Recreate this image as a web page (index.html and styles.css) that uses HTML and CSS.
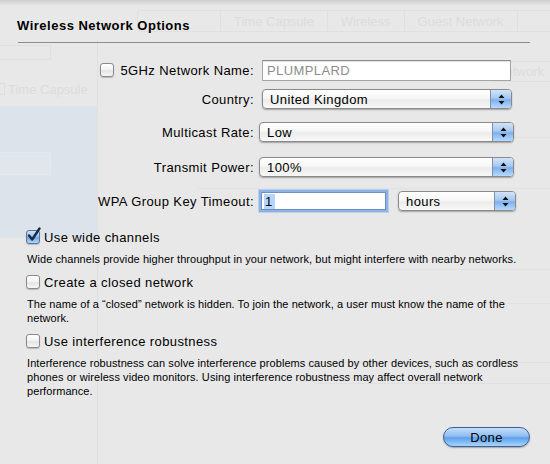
FILE: index.html
```html
<!DOCTYPE html>
<html>
<head>
<meta charset="utf-8">
<link rel="stylesheet" href="styles.css">
</head>
<body>
<div class="window">
  <div class="toolbar">
    <div class="seg">
      <span class="seg-item s1"></span>
      <span class="seg-item">Time Capsule</span>
      <span class="seg-item">Wireless</span>
      <span class="seg-item">Guest Network</span>
      <span class="seg-item s5"></span>
    </div>
  </div>
  <div class="main">
    <aside class="side">
      <div class="g-popup"></div>
      <div class="g-item"><span class="g-icon"></span><span>Time Capsule</span></div>
      <div class="g-sel">
        <div class="g-box"></div>
      </div>
    </aside>
    <div class="pane">
      <div class="g-netbtn">Network</div>
      <div class="g-line l1"></div>
      <div class="g-line l2"></div>
      <div class="g-line l3"></div>
      <div class="g-line l4"></div>
      <div class="g-pill"></div>
    </div>
  </div>
</div>

<div class="sheet">
  <h1 class="title">Wireless Network Options</h1>

  <div class="form">
    <div class="label"><span class="cb"></span><span>5GHz Network Name:</span></div>
    <div class="ctl"><div class="field name-field"><span class="placeholder">PLUMPLARD</span></div></div>

    <div class="label">Country:</div>
    <div class="ctl"><div class="popup country"><span class="popup-text">United Kingdom</span><span class="arrows"><svg width="7" height="11" viewBox="0 0 7 11"><path d="M3.5 0.5L6.5 4H0.5Z M3.5 10.5L6.5 7H0.5Z" fill="#111"/></svg></span></div></div>

    <div class="label">Multicast Rate:</div>
    <div class="ctl"><div class="popup full"><span class="popup-text">Low</span><span class="arrows"><svg width="7" height="11" viewBox="0 0 7 11"><path d="M3.5 0.5L6.5 4H0.5Z M3.5 10.5L6.5 7H0.5Z" fill="#111"/></svg></span></div></div>

    <div class="label">Transmit Power:</div>
    <div class="ctl"><div class="popup full"><span class="popup-text">100%</span><span class="arrows"><svg width="7" height="11" viewBox="0 0 7 11"><path d="M3.5 0.5L6.5 4H0.5Z M3.5 10.5L6.5 7H0.5Z" fill="#111"/></svg></span></div></div>

    <div class="label">WPA Group Key Timeout:</div>
    <div class="ctl timeout">
      <div class="field focus"><span class="sel-text">1</span></div>
      <div class="popup hours"><span class="popup-text">hours</span><span class="arrows"><svg width="7" height="11" viewBox="0 0 7 11"><path d="M3.5 0.5L6.5 4H0.5Z M3.5 10.5L6.5 7H0.5Z" fill="#111"/></svg></span></div>
    </div>
  </div>

  <div class="options">
    <div class="opt first"><span class="cb checked"><svg class="check" width="16" height="16" viewBox="0 0 16 16"><path d="M3 8.5L6.2 12.5L13.5 1.5" fill="none" stroke="#1b2a44" stroke-width="2.4" stroke-linecap="round" stroke-linejoin="round"/></svg></span><span>Use wide channels</span></div>
    <p class="desc">Wide channels provide higher throughput in your network, but might interfere with nearby networks.</p>

    <div class="opt"><span class="cb"></span><span>Create a closed network</span></div>
    <p class="desc">The name of a “closed” network is hidden. To join the network, a user must know the name of the network.</p>

    <div class="opt"><span class="cb"></span><span>Use interference robustness</span></div>
    <p class="desc">Interference robustness can solve interference problems caused by other devices, such as cordless phones or wireless video monitors. Using interference robustness may affect overall network performance.</p>
  </div>

  <div class="footer">
    <button class="done">Done</button>
  </div>
</div>
</body>
</html>
```

FILE: styles.css
```css
html, body {
  margin: 0;
  padding: 0;
  background: #e8e8e8;
}

body {
  width: 550px;
  height: 464px;
  overflow: hidden;
  position: relative;
  font-family: "Liberation Sans", Arial, sans-serif;
  color: #000;
}

/* ---------- ghost window behind the sheet ---------- */
.window {
  width: 550px;
  height: 464px;
  display: flex;
  flex-direction: column;
  color: #dcdcdc;
  font-size: 13px;
  overflow: hidden;
}

.toolbar {
  height: 40px;
  display: flex;
  align-items: flex-start;
  overflow: hidden;
}

.seg {
  margin: 10px 0 0 137px;
  display: flex;
  height: 20px;
  border: 1px solid #e0e0e0;
  border-right: none;
  border-radius: 4px 0 0 4px;
  flex: none;
}

.seg-item {
  display: flex;
  align-items: center;
  padding: 0 13px;
  border-right: 1px solid #e0e0e0;
  white-space: nowrap;
}

.seg-item.s1 {
  width: 56px;
}

.seg-item.s5 {
  width: 40px;
}

.main {
  flex: 1;
  display: flex;
}

.side {
  width: 97px;
  flex: none;
  border-right: 1px solid #e0e0e0;
  display: flex;
  flex-direction: column;
}

.g-popup {
  margin-top: 5px;
  width: 50px;
  height: 13px;
  border: 1px solid #e0e0e0;
  border-left: none;
}

.g-item {
  margin-top: 21px;
  white-space: nowrap;
  height: 16px;
  display: flex;
  align-items: center;
  gap: 3px;
}

.g-icon {
  width: 4px;
  height: 10px;
  border: 1px solid #dedede;
  border-left: none;
}

.g-sel {
  margin-top: 9px;
  height: 132px;
  background: #dce3eb;
  display: flex;
  flex-direction: column;
}

.g-box {
  margin-top: 46px;
  width: 50px;
  height: 21px;
  background: #e1e6ec;
  border: 1px solid #e6eaef;
  border-left: none;
}

.pane {
  flex: 1;
  display: flex;
  flex-direction: column;
}

.g-netbtn {
  align-self: flex-end;
  margin-top: 21px;
  padding: 2px 6px;
  border: 1px solid #e0e0e0;
  border-right: none;
  border-radius: 4px 0 0 4px;
}

.g-line {
  height: 1px;
  background: #e2e2e2;
  margin-left: 100px;
}

.l1 { margin-top: 55px; }
.l2 { margin-top: 50px; }
.l3 { margin-top: 80px; }
.l4 { margin-top: 33px; }

.g-pill {
  margin: 58px 0 0 210px;
  height: 20px;
  border: 1px solid #e0e0e0;
  border-right: none;
  border-radius: 10px 0 0 10px;
}

/* ---------- sheet ---------- */
.sheet {
  position: absolute;
  inset: 0;
  display: flex;
  flex-direction: column;
  padding: 0 20px 17px 17px;
  background: linear-gradient(to bottom, rgba(190,190,190,0.6) 0px, rgba(232,232,232,0) 6px);
}

.title {
  margin: 18px 0 0 0;
  font-size: 13px;
  line-height: 16px;
  font-weight: bold;
  letter-spacing: 0.5px;
  color: #000;
  padding-bottom: 8px;
  border-bottom: 1px solid #8c8c8c;
  margin-left: 1px;
  text-indent: -1px;
}

.form {
  margin-top: 12px;
  display: grid;
  grid-template-columns: 237px 1fr;
  grid-template-rows: 30px 28px 38px 32px 36px;
  column-gap: 8px;
  font-size: 13px;
  letter-spacing: 0.4px;
}

.label {
  display: flex;
  align-items: center;
  justify-content: flex-end;
  gap: 6px;
  white-space: nowrap;
}

.ctl {
  display: flex;
  align-items: center;
}

.field {
  height: 21px;
  box-sizing: border-box;
  background: #fff;
  border: 1px solid #a4a4a4;
  border-top-color: #8a8a8a;
  box-shadow: inset 0 1px 1px rgba(0,0,0,0.12);
  display: flex;
  align-items: center;
  padding-left: 4px;
}

.name-field {
  width: 249px;
}

.placeholder {
  color: #8d8d8d;
}

.popup {
  height: 20px;
  box-sizing: border-box;
  border: 1px solid #8a8a8a;
  border-radius: 4px;
  background: linear-gradient(to bottom, #ffffff 0%, #f7f7f7 45%, #ececec 55%, #f8f8f8 100%);
  box-shadow: 0 1px 1.5px rgba(0,0,0,0.3);
  display: flex;
  align-items: center;
  overflow: hidden;
}

.popup-text {
  flex: 1;
  padding-left: 7px;
  white-space: nowrap;
}

.arrows {
  width: 20px;
  align-self: stretch;
  border-left: 1px solid #7d91ac;
  background: linear-gradient(to bottom, #d2e4f8 0%, #a5c8f0 45%, #7fb0ec 55%, #b6daff 100%);
  display: flex;
  align-items: center;
  justify-content: center;
}

.country {
  width: 250px;
}

.full {
  width: 255px;
  margin-left: -3px;
}

.timeout {
  gap: 12px;
}

.field.focus {
  width: 125px;
  height: 18px;
  margin-left: -1px;
  border-color: #6f8fbf;
  box-shadow: 0 0 0 2px #8db2e3, 0 0 0 3px #b8d0ee;
  padding-left: 2px;
}

.sel-text {
  background: #b5d5ff;
  padding: 0 2px 0 1px;
  line-height: 15px;
}

.hours {
  width: 118px;
}

/* ---------- options ---------- */
.options {
  margin-left: 9px;
  display: flex;
  flex-direction: column;
}

.opt {
  display: flex;
  align-items: center;
  gap: 4px;
  height: 16px;
  font-size: 13px;
  letter-spacing: 0.4px;
  margin-top: 8px;
  white-space: nowrap;
}

.opt.first {
  margin-top: 10px;
}

.cb {
  width: 14px;
  height: 14px;
  box-sizing: border-box;
  border: 1px solid #8a8a8a;
  border-radius: 3px;
  background: linear-gradient(to bottom, #ffffff 0%, #f2f2f2 50%, #e4e4e4 55%, #f6f6f6 100%);
  box-shadow: 0 1px 1px rgba(0,0,0,0.2);
  flex: none;
  position: relative;
}

.cb.checked {
  border-color: #5c7399;
  background: linear-gradient(to bottom, #cfe2f8 0%, #9cc3ee 45%, #74a9e8 55%, #afd6ff 100%);
}

.check {
  position: absolute;
  left: -1px;
  top: -4px;
}

.desc {
  margin: 7px 0 0 1px;
  font-size: 11px;
  line-height: 14px;
  letter-spacing: 0.07px;
  color: #000;
}

.footer {
  margin-top: auto;
  display: flex;
  justify-content: flex-end;
}

.done {
  width: 87px;
  height: 20px;
  border: 1px solid #3f5f94;
  border-radius: 10px;
  background: linear-gradient(to bottom, #c4def9 0%, #8fbdf1 45%, #5ea0eb 55%, #a6d6ff 100%);
  box-shadow: 0 1px 1.5px rgba(0,0,0,0.3);
  font-family: "Liberation Sans", Arial, sans-serif;
  font-size: 13px;
  letter-spacing: 0.4px;
  color: #000;
  padding: 0;
}
```
